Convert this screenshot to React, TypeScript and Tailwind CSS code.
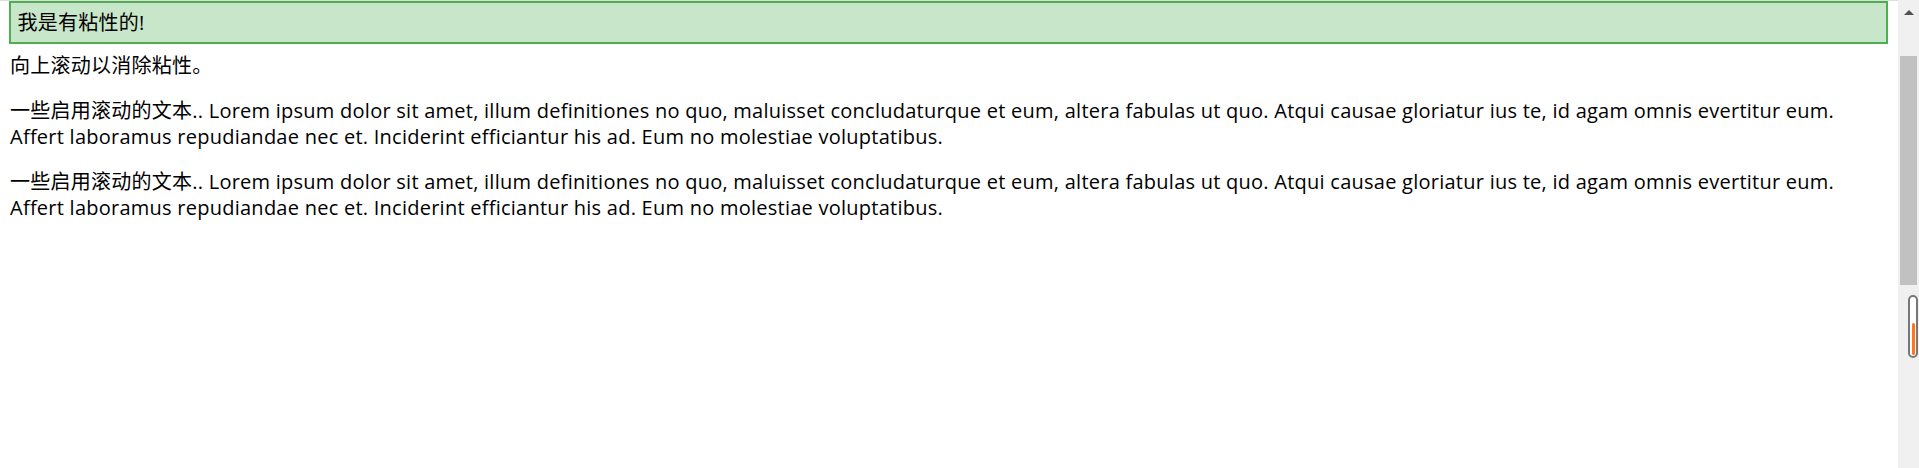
const lorem =
  "一些启用滚动的文本.. Lorem ipsum dolor sit amet, illum definitiones no quo, maluisset concludaturque et eum, altera fabulas ut quo. Atqui causae gloriatur ius te, id agam omnis evertitur eum.";
const lorem2 =
  "Affert laboramus repudiandae nec et. Inciderint efficiantur his ad. Eum no molestiae voluptatibus.";

const ScrollBar = () => {
  return (
    <div className="relative flex w-[21px] shrink-0 flex-col items-center bg-[#f0f0f0]">
      {/* up arrow */}
      <div className="flex h-[24px] w-full items-center justify-center">
        <div className="h-0 w-0 border-x-[5px] border-b-[5px] border-x-transparent border-b-[#505050]" />
      </div>
      <div className="mt-[32px] h-[229px] w-[17px] bg-[#c1c1c1]" />
      {/* little overlay indicator */}
      <div className="absolute left-[10px] top-[295px] flex h-[63px] w-[10px] flex-col justify-end rounded-full border-2 border-[#777777] bg-white p-[1px]">
        <div className="mx-auto h-[32px] w-[3px] rounded-full bg-[#ff7518]" />
      </div>
    </div>
  );
};

export default function App() {
  return (
    <div
      className="flex h-[468px] w-full overflow-hidden bg-white text-[20px] tracking-[0.25px] text-black"
      style={{ fontFamily: '"Open Sans", "Noto Sans CJK SC", sans-serif' }}
    >
      <div className="flex-1 border-t border-[#dcdcdc]">
        <div className="ml-[9px] mr-[10px] border-2 border-[#4caf50] bg-[#c8e6c9] px-[6.5px] py-[6.5px] leading-[26px]">
          我是有粘性的!
        </div>
        <div className="px-[10px] pt-[9px] leading-[26px]">
          <p>向上滚动以消除粘性。</p>
          <p className="mt-[19px]">
            {lorem}
            <br />
            {lorem2}
          </p>
          <p className="mt-[19px]">
            {lorem}
            <br />
            {lorem2}
          </p>
        </div>
      </div>
      <ScrollBar />
    </div>
  );
}
